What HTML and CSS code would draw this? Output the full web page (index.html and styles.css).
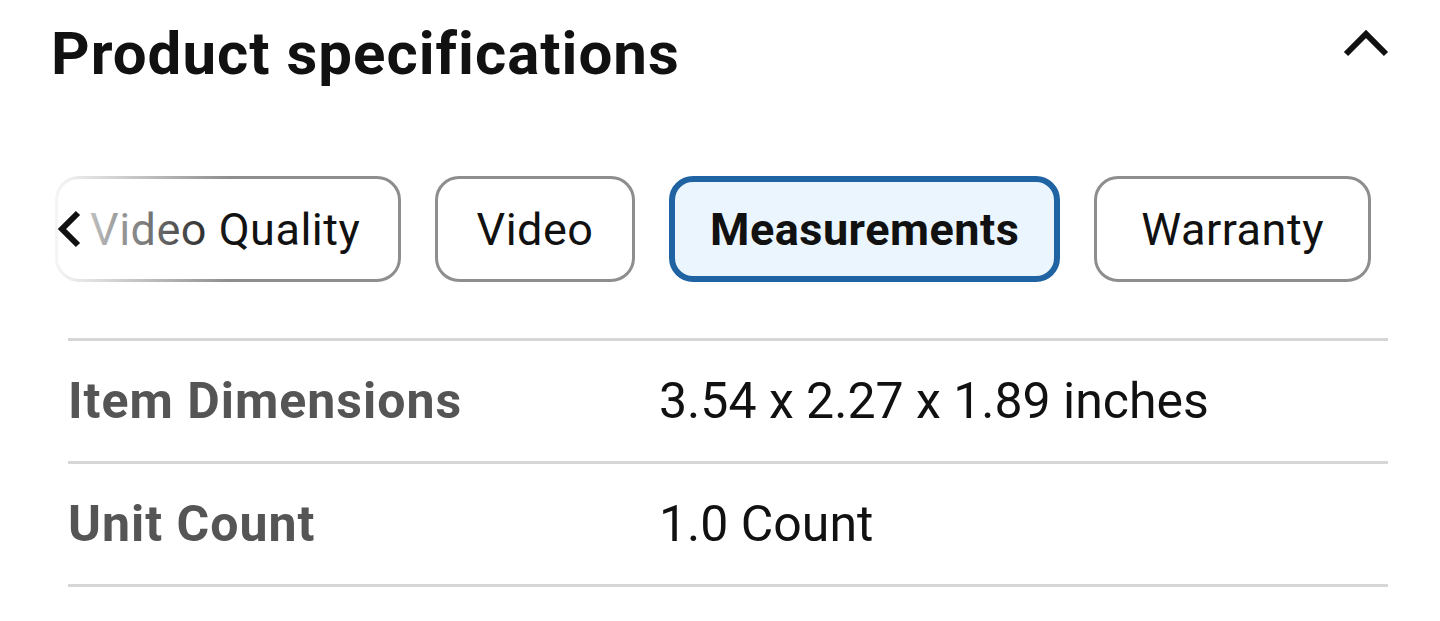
FILE: index.html
```html
<!DOCTYPE html>
<html lang="en">
<head>
<meta charset="utf-8">
<title>Product specifications</title>
<link rel="stylesheet" href="styles.css">
</head>
<body>
<section class="specs">
  <header class="specs-header">
    <h2 class="specs-title">Product specifications</h2>
    <button class="collapse-btn" aria-label="Collapse">
      <svg width="48" height="28" viewBox="0 0 48 28"><path d="M4 25 L24 5 L44 25" fill="none" stroke="#111" stroke-width="6"/></svg>
    </button>
  </header>
  <div class="tabs-wrap">
    <div class="tabs">
      <button class="tab tab-first">Video Quality</button>
      <button class="tab">Video</button>
      <button class="tab tab-active">Measurements</button>
      <button class="tab tab-wide">Warranty</button>
    </div>
    <div class="tabs-fade"></div>
    <svg class="scroll-left" width="26" height="40" viewBox="0 0 26 40"><path d="M22 4 L6 20 L22 36" fill="none" stroke="#111" stroke-width="6"/></svg>
  </div>
  <div class="spec-table">
    <div class="spec-row">
      <div class="spec-label">Item Dimensions</div>
      <div class="spec-value">3.54 x 2.27 x 1.89 inches</div>
    </div>
    <div class="spec-row">
      <div class="spec-label">Unit Count</div>
      <div class="spec-value">1.0 Count</div>
    </div>
  </div>
</section>
</body>
</html>
```
FILE: styles.css
```css
html, body {
  margin: 0;
  padding: 0;
  background: #fff;
}
body {
  font-family: Roboto, "Liberation Sans", sans-serif;
  color: #111;
}
.specs {
  width: 1440px;
  height: 621px;
  overflow: hidden;
}
.specs-header {
  display: flex;
  align-items: center;
  justify-content: space-between;
  height: 106px;
  padding: 0 50px 0 51px;
}
.specs-title {
  margin: 0;
  font-size: 60px;
  font-weight: 700;
  letter-spacing: 1px;
  color: #111;
}
.collapse-btn {
  border: 0;
  background: none;
  padding: 0;
  margin-top: -20px;
  display: flex;
}
.tabs-wrap {
  position: relative;
  margin-top: 70px;
  height: 106px;
}
.tabs {
  display: flex;
  gap: 34px;
  padding-left: 55px;
}
.tab {
  height: 106px;
  box-sizing: border-box;
  border: 3px solid #8e8e8e;
  border-radius: 24px;
  background: #fff;
  font-family: Roboto, "Liberation Sans", sans-serif;
  font-size: 45px;
  letter-spacing: 0.5px;
  color: #111;
  padding: 0 38.5px;
  white-space: nowrap;
}
.tab-first {
  width: 346px;
  padding-left: 32px;
  text-align: left;
}
.tab-wide {
  padding: 0 44px;
}
.tab-active {
  border: 6px solid #1f63a3;
  background: #eaf5fd;
  font-weight: 700;
  padding: 0 35px;
}
.tabs-fade {
  position: absolute;
  left: 30px;
  top: -4px;
  width: 200px;
  height: 114px;
  background: linear-gradient(to right, rgba(255,255,255,1) 0%, rgba(255,255,255,0.92) 12%, rgba(255,255,255,0) 100%);
  pointer-events: none;
}
.scroll-left {
  position: absolute;
  left: 56px;
  top: 33px;
}
.spec-table {
  margin: 56px 52px 0 68px;
  border-top: 3px solid #d6d6d6;
}
.spec-row {
  display: flex;
  align-items: center;
  height: 120px;
  border-bottom: 3px solid #d6d6d6;
}
.spec-label {
  width: 591px;
  font-size: 50px;
  font-weight: 700;
  letter-spacing: 1px;
  color: #555;
}
.spec-value {
  font-size: 50px;
  color: #111;
}
```
